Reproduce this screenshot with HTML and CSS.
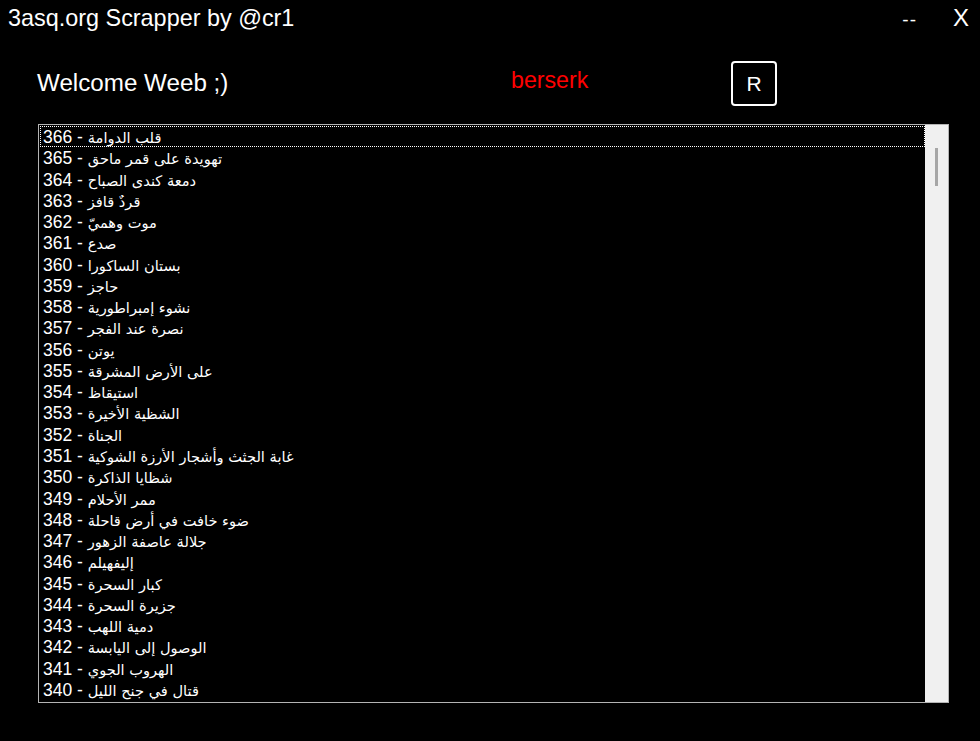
FILE: index.html
```html
<!DOCTYPE html>
<html lang="en">
<head>
<meta charset="utf-8">
<title>3asq.org Scrapper by @cr1</title>
<link rel="stylesheet" href="styles.css">
</head>
<body>
<div class="window">
  <div class="titlebar">
    <div class="title">3asq.org Scrapper by @cr1</div>
    <div class="controls">
      <span class="min">--</span>
      <span class="close">X</span>
    </div>
  </div>
  <div class="content">
    <div class="header">
      <div class="welcome">Welcome Weeb ;)</div>
      <div class="query">berserk</div>
      <div class="rbtn">R</div>
    </div>
    <div class="listbox">
      <ul class="items">
        <li class="item focused">366 - <span class="ar">قلب الدوامة</span></li>
        <li class="item">365 - <span class="ar">تهويدة على قمر ماحق</span></li>
        <li class="item">364 - <span class="ar">دمعة كندى الصباح</span></li>
        <li class="item">363 - <span class="ar">قردٌ قافز</span></li>
        <li class="item">362 - <span class="ar">موت وهميّ</span></li>
        <li class="item">361 - <span class="ar">صدع</span></li>
        <li class="item">360 - <span class="ar">بستان الساكورا</span></li>
        <li class="item">359 - <span class="ar">حاجز</span></li>
        <li class="item">358 - <span class="ar">نشوء إمبراطورية</span></li>
        <li class="item">357 - <span class="ar">نصرة عند الفجر</span></li>
        <li class="item">356 - <span class="ar">يوتن</span></li>
        <li class="item">355 - <span class="ar">على الأرض المشرقة</span></li>
        <li class="item">354 - <span class="ar">استيقاظ</span></li>
        <li class="item">353 - <span class="ar">الشظية الأخيرة</span></li>
        <li class="item">352 - <span class="ar">الجناة</span></li>
        <li class="item">351 - <span class="ar">غابة الجثث وأشجار الأرزة الشوكية</span></li>
        <li class="item">350 - <span class="ar">شظايا الذاكرة</span></li>
        <li class="item">349 - <span class="ar">ممر الأحلام</span></li>
        <li class="item">348 - <span class="ar">ضوء خافت في أرض قاحلة</span></li>
        <li class="item">347 - <span class="ar">جلالة عاصفة الزهور</span></li>
        <li class="item">346 - <span class="ar">إليفهيلم</span></li>
        <li class="item">345 - <span class="ar">كبار السحرة</span></li>
        <li class="item">344 - <span class="ar">جزيرة السحرة</span></li>
        <li class="item">343 - <span class="ar">دمية اللهب</span></li>
        <li class="item">342 - <span class="ar">الوصول إلى اليابسة</span></li>
        <li class="item">341 - <span class="ar">الهروب الجوي</span></li>
        <li class="item">340 - <span class="ar">قتال في جنح الليل</span></li>
      </ul>
      <div class="scrollbar"><div class="thumb"></div></div>
    </div>
  </div>
</div>
</body>
</html>
```
FILE: styles.css
```css
html, body {
  margin: 0;
  padding: 0;
  background: #000;
}
body {
  width: 980px;
  height: 741px;
  overflow: hidden;
  font-family: "Liberation Sans", "DejaVu Sans", Arial, sans-serif;
  color: #fff;
}
.titlebar {
  height: 40px;
  display: flex;
  justify-content: space-between;
  align-items: flex-start;
}
.title {
  font-size: 23.4px;
  line-height: 26px;
  margin: 5px 0 0 8px;
}
.controls {
  display: flex;
  align-items: flex-start;
}
.min {
  font-size: 19px;
  line-height: 20px;
  margin-top: 10px;
  margin-right: 36px;
  letter-spacing: 1px;
}
.close {
  font-size: 24px;
  line-height: 26px;
  margin-top: 5px;
  margin-right: 11px;
}
.content {
  padding: 0 31px 0 37px;
}
.header {
  height: 84px;
  display: flex;
  align-items: flex-start;
  box-sizing: border-box;
  padding-top: 21px;
}
.welcome {
  width: 474px;
  font-size: 24.2px;
  line-height: 26px;
  margin-top: 9px;
}
.query {
  width: 220px;
  color: #f00;
  font-size: 23.2px;
  line-height: 26px;
  margin-top: 6px;
}
.rbtn {
  width: 46px;
  height: 45px;
  box-sizing: border-box;
  border: 2px solid #fff;
  border-radius: 4px;
  display: flex;
  align-items: center;
  justify-content: center;
  font-size: 21px;
}
.listbox {
  margin-left: 1px;
  height: 579px;
  box-sizing: border-box;
  border: 1px solid #b4b4b4;
  display: flex;
  background: #000;
}
.items {
  list-style: none;
  margin: 0;
  padding: 1px 0 0 1px;
  flex: 1;
  overflow: hidden;
}
.item {
  height: 21.27px;
  line-height: 22px;
  font-size: 17.5px;
  padding-left: 3px;
  box-sizing: border-box;
  white-space: nowrap;
  direction: ltr;
  text-align: left;
}
.ar {
  font-family: "DejaVu Sans", sans-serif;
  font-size: 14.6px;
}
.item.focused {
  outline: 1px dotted #fff;
  outline-offset: -1px;
}
.scrollbar {
  width: 23px;
  background: #f0f0f0;
  position: relative;
}
.thumb {
  position: absolute;
  left: 10px;
  top: 23px;
  width: 3px;
  height: 38px;
  background: #a6a6a6;
}
```
